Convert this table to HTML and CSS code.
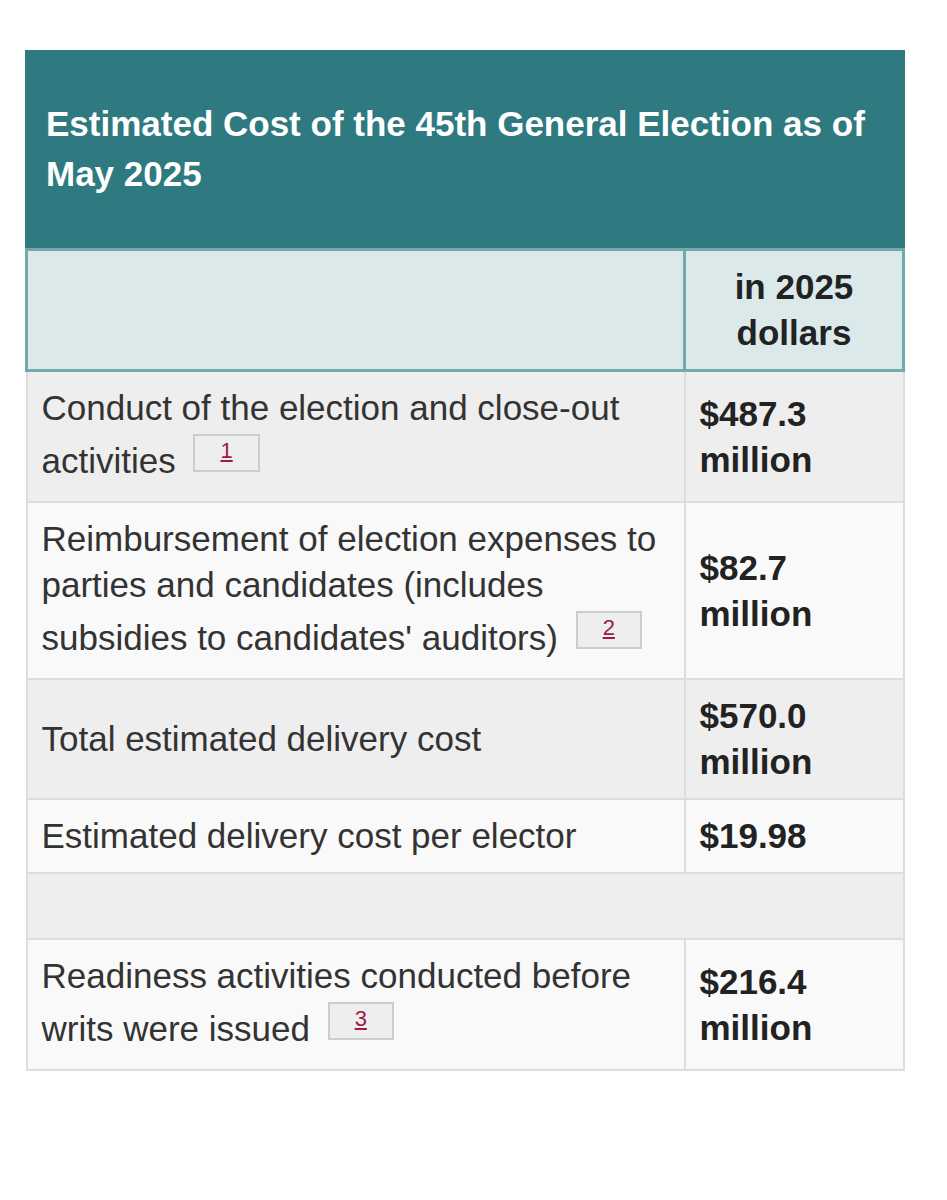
FILE: index.html
```html
<!DOCTYPE html>
<html lang="en">
<head>
<meta charset="utf-8">
<title>Estimated Cost of the 45th General Election</title>
<link rel="stylesheet" href="styles.css">
</head>
<body>
<div class="page">
  <table class="cost-table">
    <caption class="caption">Estimated Cost of the 45th General Election as of May 2025</caption>
    <thead>
      <tr class="head-row">
        <th class="head-cell head-blank"></th>
        <th class="head-cell head-value">in 2025 dollars</th>
      </tr>
    </thead>
    <tbody>
      <tr class="row odd">
        <td class="label">Conduct of the election and close-out activities <span class="fn"><a href="#fn1">1</a></span></td>
        <td class="value">$487.3 million</td>
      </tr>
      <tr class="row even">
        <td class="label">Reimbursement of election expenses to parties and candidates (includes subsidies to candidates' auditors) <span class="fn"><a href="#fn2">2</a></span></td>
        <td class="value">$82.7 million</td>
      </tr>
      <tr class="row odd">
        <td class="label">Total estimated delivery cost</td>
        <td class="value">$570.0 million</td>
      </tr>
      <tr class="row even">
        <td class="label">Estimated delivery cost per elector</td>
        <td class="value">$19.98</td>
      </tr>
      <tr class="row odd spacer">
        <td colspan="2"></td>
      </tr>
      <tr class="row even">
        <td class="label">Readiness activities conducted before writs were issued <span class="fn"><a href="#fn3">3</a></span></td>
        <td class="value">$216.4 million</td>
      </tr>
    </tbody>
  </table>
</div>
</body>
</html>
```
FILE: styles.css
```css
html, body {
  margin: 0;
  padding: 0;
  background: #ffffff;
}

.page {
  padding: 50px 42px 0 25px;
  font-family: "Liberation Sans", Arial, Helvetica, sans-serif;
  color: #333333;
}

.cost-table {
  width: 880px;
  border-collapse: collapse;
  table-layout: fixed;
}

.caption {
  background: #2e7a80;
  color: #ffffff;
  font-weight: bold;
  font-size: 35px;
  line-height: 50px;
  text-align: left;
  padding: 49px 21px 49px 21px;
}

.head-cell {
  background: #dce9eb;
  border: 3px solid #73a9ad;
  font-size: 35px;
  line-height: 46px;
  font-weight: bold;
  color: #222222;
  padding: 13px 14px;
  height: 86px;
}

.head-blank {
  width: 627px;
}

.head-value {
  text-align: center;
}

.row td {
  border: 2px solid #dddddd;
  font-size: 35px;
  line-height: 46px;
  padding: 13px 14px 13px 14px;
  vertical-align: middle;
}

.row.odd td {
  background: #eeeeee;
}

.row.even td {
  background: #f9f9f9;
}

.row .label {
  color: #333333;
}

.row .value {
  font-weight: bold;
  color: #222222;
}

.row.spacer td {
  height: 38px;
  padding: 13px 0;
}

.fn {
  display: inline-block;
  font-size: 22px;
  line-height: 22px;
  padding: 4px 25px 8px 25px;
  margin: 3px 0 16px 8px;
  background: #eeeeee;
  border: 2px solid #cccccc;
  vertical-align: 15px;
}

.fn a {
  color: #9b1c3f;
  text-decoration: underline;
}
```
